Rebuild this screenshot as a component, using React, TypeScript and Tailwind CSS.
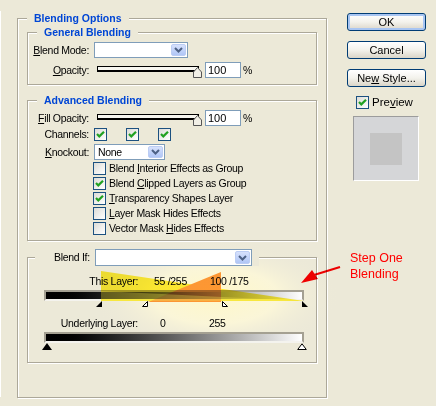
import React from "react";

const legend =
  "self-start -mt-[7px] ml-[9px] px-[7px] h-[13px] leading-[13px] bg-[#ECE9D8] font-bold text-[#0046D5] tracking-normal";

function Group({ className = "", children }: { className?: string; children: React.ReactNode }) {
  return (
    <div
      className={`border border-[#ACA899] shadow-[inset_1px_1px_0_#fff,1px_1px_0_#fff] flex flex-col shrink-0 ${className}`}
    >
      {children}
    </div>
  );
}

function Check({ on }: { on?: boolean }) {
  return (
    <div className="w-[13px] h-[13px] shrink-0 border border-[#1C5180] bg-linear-to-br from-[#DCDCD7] to-white flex items-center justify-center">
      {on && (
        <svg width="9" height="9" viewBox="0 0 9 9">
          <polyline points="1,4 3.3,6.4 8,1.7" fill="none" stroke="#21A121" strokeWidth="2.2" />
        </svg>
      )}
    </div>
  );
}

function Combo({ w, h = "h-[16px]", value = "" }: { w: string; h?: string; value?: string }) {
  return (
    <div className={`${w} ${h} shrink-0 border border-[#7F9DB9] bg-white flex items-stretch`}>
      <span className="flex-1 pl-[3px] flex items-center">{value}</span>
      <div className="w-[15px] m-px rounded-[2px] bg-linear-to-b from-[#D6E1FC] to-[#B0C6F6] border border-[#BCCDF4] flex items-center justify-center">
        <svg width="9" height="6" viewBox="0 0 9 6">
          <polyline points="1,1 4.5,4.5 8,1" fill="none" stroke="#4D6185" strokeWidth="2" />
        </svg>
      </div>
    </div>
  );
}

function Slider() {
  return (
    <svg width="108" height="16" viewBox="0 0 108 16" className="shrink-0">
      <rect x="3.5" y="4.5" width="101" height="4" fill="#F7F6F0" stroke="#000" />
      <line x1="3" y1="9.5" x2="105" y2="9.5" stroke="#000" />
      <polygon points="99.5,15.5 99.5,10 103.5,5.5 107.5,10 107.5,15.5" fill="#F1EFE6" stroke="#555" />
    </svg>
  );
}

function Num() {
  return (
    <div className="ml-[3px] w-[36px] h-[16px] border border-[#7F9DB9] bg-white pl-[2px] flex items-center text-[11px] tracking-normal">
      100
    </div>
  );
}

function Btn({ children, def, className = "" }: { children: React.ReactNode; def?: boolean; className?: string }) {
  return (
    <div
      className={`w-[79px] h-[18px] rounded-[3px] border border-[#003C74] bg-linear-to-b from-white via-[#F3F2EC] to-[#DAD5C8] flex items-center justify-center text-[11px] tracking-normal ${
        def ? "shadow-[inset_0_0_0_2px_#A8C5F2]" : ""
      } ${className}`}
    >
      {children}
    </div>
  );
}

const bar =
  "ml-[16px] w-[260px] h-[11px] shrink-0 border-2 border-[#A4A092] border-b-[#F4F3EE] bg-linear-to-r from-black to-white";

const options = [
  { on: false, label: <>Blend <u>I</u>nterior Effects as Group</> },
  { on: true, label: <>Blend <u>C</u>lipped Layers as Group</> },
  { on: true, label: <><u>T</u>ransparency Shapes Layer</> },
  { on: false, label: <><u>L</u>ayer Mask Hides Effects</> },
  { on: false, label: <>Vector Mask <u>H</u>ides Effects</> },
];

export default function App() {
  return (
    <div className="relative isolate w-[436px] h-[406px] overflow-hidden bg-[#ECE9D8] flex items-start text-black text-[10.5px] leading-[13px] tracking-[-0.3px] font-['Liberation_Sans',Arial,sans-serif]">
      {/* soft glow behind the blend-if sliders */}
      <svg className="absolute inset-0 -z-10 pointer-events-none" width="436" height="406">
        <defs>
          <radialGradient id="glow">
            <stop offset="0" stopColor="#FFF8C8" />
            <stop offset="0.5" stopColor="#FCF7D8" stopOpacity="0.9" />
            <stop offset="1" stopColor="#ECE9D8" stopOpacity="0" />
          </radialGradient>
        </defs>
        <ellipse cx="215" cy="296" rx="125" ry="56" fill="url(#glow)" />
      </svg>

      <div className="w-px h-[386px] mt-[11px] bg-white shrink-0" />

      <Group className="ml-[16px] mt-[18px] w-[310px] h-[380px]">
        <span className={legend}>Blending Options</span>

        <Group className="ml-[9px] mt-[7px] w-[290px] h-[53px]">
          <span className={legend}>General Blending</span>
          <div className="mt-[3px] h-[16px] flex items-center">
            <span className="w-[61px] text-right">
              <u>B</u>lend Mode:
            </span>
            <div className="ml-[5px]">
              <Combo w="w-[94px]" />
            </div>
          </div>
          <div className="mt-[4px] h-[16px] flex items-center">
            <span className="w-[61px] text-right">
              <u>O</u>pacity:
            </span>
            <div className="ml-[5px] flex items-center">
              <Slider />
              <Num />
              <span className="ml-[2px]">%</span>
            </div>
          </div>
        </Group>

        <Group className="ml-[9px] mt-[15px] w-[290px] h-[141px]">
          <span className={legend}>Advanced Blending</span>
          <div className="mt-[3px] h-[16px] flex items-center">
            <span className="w-[61px] text-right">
              <u>F</u>ill Opacity:
            </span>
            <div className="ml-[5px] flex items-center">
              <Slider />
              <Num />
              <span className="ml-[2px]">%</span>
            </div>
          </div>
          <div className="mt-[2px] h-[13px] flex items-center">
            <span className="w-[61px] text-right">Channels:</span>
            <div className="ml-[5px] flex gap-[19px]">
              <Check on />
              <Check on />
              <Check on />
            </div>
          </div>
          <div className="mt-[3px] h-[16px] flex items-center">
            <span className="w-[61px] text-right">
              <u>K</u>nockout:
            </span>
            <div className="ml-[5px]">
              <Combo w="w-[71px]" value="None" />
            </div>
          </div>
          <div className="mt-[2px] ml-[65px] flex flex-col gap-[2px]">
            {options.map((o, i) => (
              <div key={i} className="h-[13px] flex items-center">
                <Check on={o.on} />
                <span className="ml-[3px]">{o.label}</span>
              </div>
            ))}
          </div>
        </Group>

        <Group className="ml-[9px] mt-[16px] w-[290px] h-[106px]">
          <div className="self-start -mt-[9px] ml-[7px] pl-[19px] pr-[7px] h-[17px] bg-[#ECE9D8] flex items-center">
            <span className="w-[41px]">Blend If:</span>
            <Combo w="w-[157px]" h="h-[17px]" />
          </div>
          <div className="mt-[9px] h-[13px] flex items-center">
            <span className="w-[110px] text-right">This Layer:</span>
            <span className="ml-[16px] w-[56px]">55 /255</span>
            <span>100 /175</span>
          </div>
          <div className={`mt-[2px] ${bar}`} />
          <div className="relative ml-[16px] w-[260px] h-[7px]">
            <svg className="absolute left-[52px] top-0" width="6" height="6">
              <polygon points="6,0 6,6 0,6" fill="#000" />
            </svg>
            <svg className="absolute left-[98px] top-0" width="6" height="6">
              <polygon points="5.5,0.5 5.5,5.5 0.5,5.5" fill="#fff" stroke="#000" />
            </svg>
            <svg className="absolute left-[178px] top-0" width="6" height="6">
              <polygon points="0.5,0.5 0.5,5.5 5.5,5.5" fill="#fff" stroke="#000" />
            </svg>
            <svg className="absolute left-[258px] top-0" width="6" height="6">
              <polygon points="0,0 0,6 6,6" fill="#000" />
            </svg>
          </div>
          <div className="mt-[9px] h-[13px] flex items-center">
            <span className="w-[110px] text-right">Underlying Layer:</span>
            <span className="ml-[22px] w-[49px]">0</span>
            <span>255</span>
          </div>
          <div className={`mt-[2px] ${bar}`} />
          <div className="relative ml-[16px] w-[260px] h-[7px]">
            <svg className="absolute -left-[2px] top-0" width="10" height="7">
              <polygon points="5,0 10,7 0,7" fill="#000" />
            </svg>
            <svg className="absolute left-[253px] top-0" width="10" height="7">
              <polygon points="5,0.8 9.3,6.5 0.7,6.5" fill="#fff" stroke="#000" />
            </svg>
          </div>
        </Group>
      </Group>

      <div className="ml-[20px] mt-[13px] w-[79px] flex flex-col shrink-0">
        <Btn def>OK</Btn>
        <Btn className="mt-[10px]">Cancel</Btn>
        <Btn className="mt-[10px]">
          Ne<u>w</u>&nbsp;Style...
        </Btn>
        <div className="mt-[9px] ml-[9px] h-[13px] flex items-center">
          <Check on />
          <span className="ml-[3px] text-[11.5px] tracking-normal">
            Pre<u>v</u>iew
          </span>
        </div>
        <div className="mt-[7px] ml-[6px] w-[66px] h-[65px] bg-[#D5D6D8] border border-[#9C9C9C] border-r-white border-b-white flex items-center justify-center">
          <div className="w-[32px] h-[32px] bg-[#C4C4C4]" />
        </div>
        <div className="mt-[70px] ml-[3px] text-[12.5px] leading-[15.5px] tracking-normal text-[#FF0000]">
          Step One
          <br />
          Blending
        </div>
      </div>

      {/* highlight shapes and arrow drawn over the dialog */}
      <svg className="absolute inset-0 mix-blend-multiply pointer-events-none" width="436" height="406">
        <polygon points="101,271 304,301 101,301" fill="#FFF03A" />
        <polygon points="148,302 221,272 221,302" fill="#FF9C3E" />
        <line x1="314" y1="275" x2="340" y2="267" stroke="#FF0000" strokeWidth="2" />
        <polygon points="301,283 312,270 318,279" fill="#FF0000" />
      </svg>
      <svg className="absolute inset-0 pointer-events-none" width="436" height="406">
        <polygon points="101,291 304,301 101,301" fill="#FFEE55" opacity="0.3" />
      </svg>
    </div>
  );
}
